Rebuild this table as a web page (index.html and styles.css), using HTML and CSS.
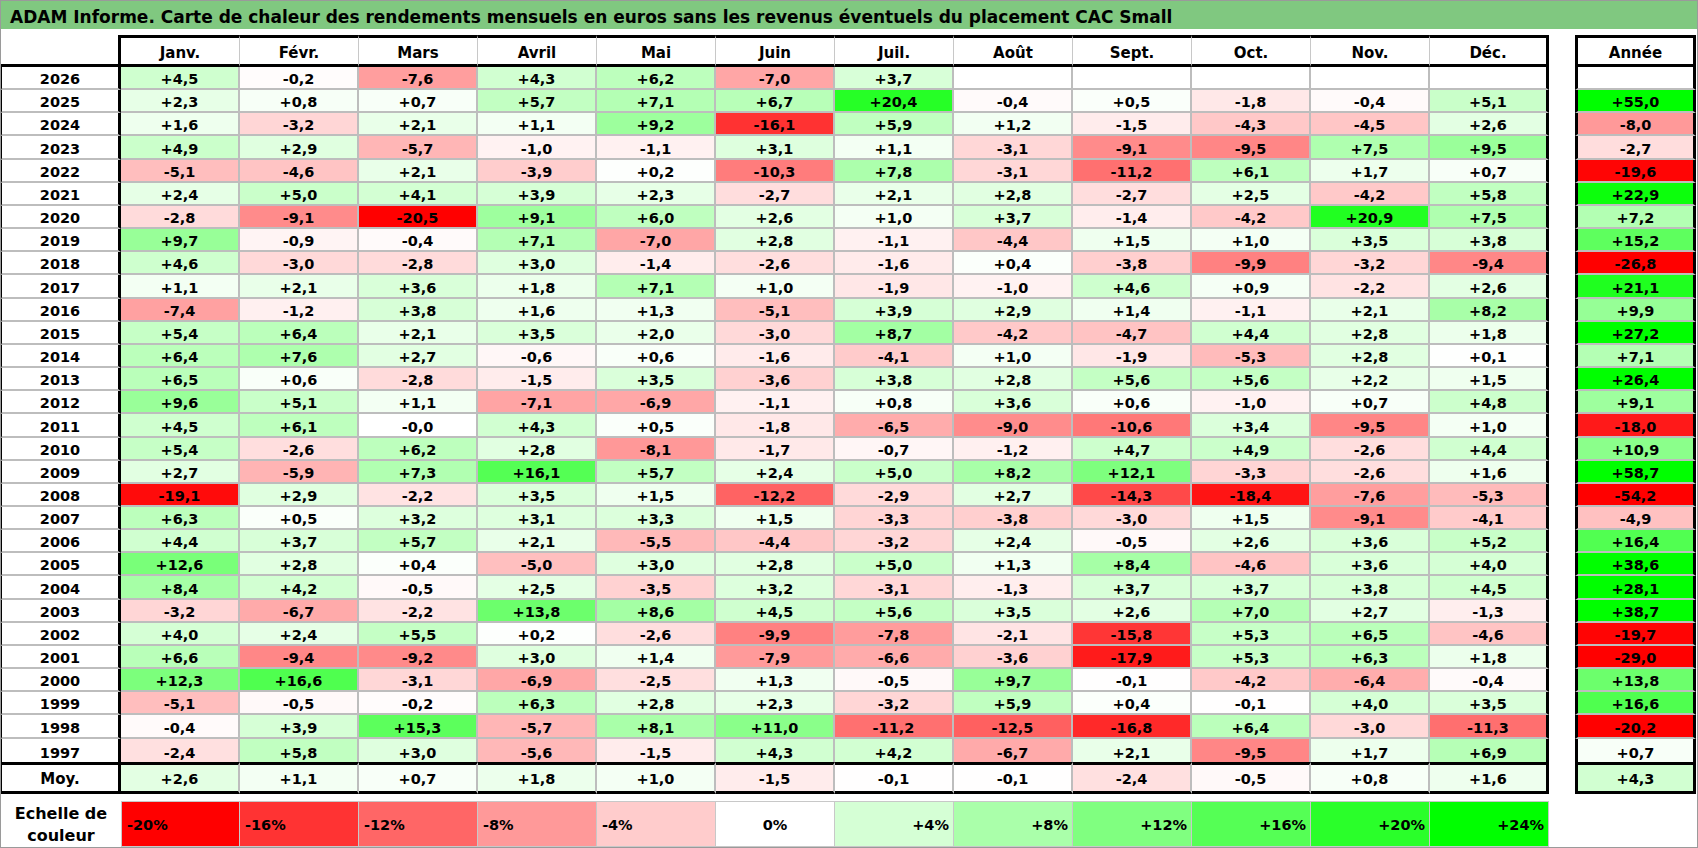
FILE: index.html
```html
<!DOCTYPE html>
<html lang="fr">
<head>
<meta charset="utf-8">
<title>ADAM Informe - Carte de chaleur CAC Small</title>
<link rel="stylesheet" href="styles.css">
</head>
<body>
<div class="page">
  <div class="title">ADAM Informe. Carte de chaleur des rendements mensuels en euros sans les revenus éventuels du placement CAC Small</div>
  <div class="heatmap">
    <div class="row head"><div class="yr"></div><div class="c">Janv.</div><div class="c">Févr.</div><div class="c">Mars</div><div class="c">Avril</div><div class="c">Mai</div><div class="c">Juin</div><div class="c">Juil.</div><div class="c">Août</div><div class="c">Sept.</div><div class="c">Oct.</div><div class="c">Nov.</div><div class="c">Déc.</div><div class="tot">Année</div></div>
    <div class="row"><div class="yr">2026</div><div class="c">+4,5</div><div class="c">-0,2</div><div class="c">-7,6</div><div class="c">+4,3</div><div class="c">+6,2</div><div class="c">-7,0</div><div class="c">+3,7</div><div class="c"></div><div class="c"></div><div class="c"></div><div class="c"></div><div class="c"></div><div class="tot"></div></div>
    <div class="row"><div class="yr">2025</div><div class="c">+2,3</div><div class="c">+0,8</div><div class="c">+0,7</div><div class="c">+5,7</div><div class="c">+7,1</div><div class="c">+6,7</div><div class="c">+20,4</div><div class="c">-0,4</div><div class="c">+0,5</div><div class="c">-1,8</div><div class="c">-0,4</div><div class="c">+5,1</div><div class="tot">+55,0</div></div>
    <div class="row"><div class="yr">2024</div><div class="c">+1,6</div><div class="c">-3,2</div><div class="c">+2,1</div><div class="c">+1,1</div><div class="c">+9,2</div><div class="c">-16,1</div><div class="c">+5,9</div><div class="c">+1,2</div><div class="c">-1,5</div><div class="c">-4,3</div><div class="c">-4,5</div><div class="c">+2,6</div><div class="tot">-8,0</div></div>
    <div class="row"><div class="yr">2023</div><div class="c">+4,9</div><div class="c">+2,9</div><div class="c">-5,7</div><div class="c">-1,0</div><div class="c">-1,1</div><div class="c">+3,1</div><div class="c">+1,1</div><div class="c">-3,1</div><div class="c">-9,1</div><div class="c">-9,5</div><div class="c">+7,5</div><div class="c">+9,5</div><div class="tot">-2,7</div></div>
    <div class="row"><div class="yr">2022</div><div class="c">-5,1</div><div class="c">-4,6</div><div class="c">+2,1</div><div class="c">-3,9</div><div class="c">+0,2</div><div class="c">-10,3</div><div class="c">+7,8</div><div class="c">-3,1</div><div class="c">-11,2</div><div class="c">+6,1</div><div class="c">+1,7</div><div class="c">+0,7</div><div class="tot">-19,6</div></div>
    <div class="row"><div class="yr">2021</div><div class="c">+2,4</div><div class="c">+5,0</div><div class="c">+4,1</div><div class="c">+3,9</div><div class="c">+2,3</div><div class="c">-2,7</div><div class="c">+2,1</div><div class="c">+2,8</div><div class="c">-2,7</div><div class="c">+2,5</div><div class="c">-4,2</div><div class="c">+5,8</div><div class="tot">+22,9</div></div>
    <div class="row"><div class="yr">2020</div><div class="c">-2,8</div><div class="c">-9,1</div><div class="c">-20,5</div><div class="c">+9,1</div><div class="c">+6,0</div><div class="c">+2,6</div><div class="c">+1,0</div><div class="c">+3,7</div><div class="c">-1,4</div><div class="c">-4,2</div><div class="c">+20,9</div><div class="c">+7,5</div><div class="tot">+7,2</div></div>
    <div class="row"><div class="yr">2019</div><div class="c">+9,7</div><div class="c">-0,9</div><div class="c">-0,4</div><div class="c">+7,1</div><div class="c">-7,0</div><div class="c">+2,8</div><div class="c">-1,1</div><div class="c">-4,4</div><div class="c">+1,5</div><div class="c">+1,0</div><div class="c">+3,5</div><div class="c">+3,8</div><div class="tot">+15,2</div></div>
    <div class="row"><div class="yr">2018</div><div class="c">+4,6</div><div class="c">-3,0</div><div class="c">-2,8</div><div class="c">+3,0</div><div class="c">-1,4</div><div class="c">-2,6</div><div class="c">-1,6</div><div class="c">+0,4</div><div class="c">-3,8</div><div class="c">-9,9</div><div class="c">-3,2</div><div class="c">-9,4</div><div class="tot">-26,8</div></div>
    <div class="row"><div class="yr">2017</div><div class="c">+1,1</div><div class="c">+2,1</div><div class="c">+3,6</div><div class="c">+1,8</div><div class="c">+7,1</div><div class="c">+1,0</div><div class="c">-1,9</div><div class="c">-1,0</div><div class="c">+4,6</div><div class="c">+0,9</div><div class="c">-2,2</div><div class="c">+2,6</div><div class="tot">+21,1</div></div>
    <div class="row"><div class="yr">2016</div><div class="c">-7,4</div><div class="c">-1,2</div><div class="c">+3,8</div><div class="c">+1,6</div><div class="c">+1,3</div><div class="c">-5,1</div><div class="c">+3,9</div><div class="c">+2,9</div><div class="c">+1,4</div><div class="c">-1,1</div><div class="c">+2,1</div><div class="c">+8,2</div><div class="tot">+9,9</div></div>
    <div class="row"><div class="yr">2015</div><div class="c">+5,4</div><div class="c">+6,4</div><div class="c">+2,1</div><div class="c">+3,5</div><div class="c">+2,0</div><div class="c">-3,0</div><div class="c">+8,7</div><div class="c">-4,2</div><div class="c">-4,7</div><div class="c">+4,4</div><div class="c">+2,8</div><div class="c">+1,8</div><div class="tot">+27,2</div></div>
    <div class="row"><div class="yr">2014</div><div class="c">+6,4</div><div class="c">+7,6</div><div class="c">+2,7</div><div class="c">-0,6</div><div class="c">+0,6</div><div class="c">-1,6</div><div class="c">-4,1</div><div class="c">+1,0</div><div class="c">-1,9</div><div class="c">-5,3</div><div class="c">+2,8</div><div class="c">+0,1</div><div class="tot">+7,1</div></div>
    <div class="row"><div class="yr">2013</div><div class="c">+6,5</div><div class="c">+0,6</div><div class="c">-2,8</div><div class="c">-1,5</div><div class="c">+3,5</div><div class="c">-3,6</div><div class="c">+3,8</div><div class="c">+2,8</div><div class="c">+5,6</div><div class="c">+5,6</div><div class="c">+2,2</div><div class="c">+1,5</div><div class="tot">+26,4</div></div>
    <div class="row"><div class="yr">2012</div><div class="c">+9,6</div><div class="c">+5,1</div><div class="c">+1,1</div><div class="c">-7,1</div><div class="c">-6,9</div><div class="c">-1,1</div><div class="c">+0,8</div><div class="c">+3,6</div><div class="c">+0,6</div><div class="c">-1,0</div><div class="c">+0,7</div><div class="c">+4,8</div><div class="tot">+9,1</div></div>
    <div class="row"><div class="yr">2011</div><div class="c">+4,5</div><div class="c">+6,1</div><div class="c">-0,0</div><div class="c">+4,3</div><div class="c">+0,5</div><div class="c">-1,8</div><div class="c">-6,5</div><div class="c">-9,0</div><div class="c">-10,6</div><div class="c">+3,4</div><div class="c">-9,5</div><div class="c">+1,0</div><div class="tot">-18,0</div></div>
    <div class="row"><div class="yr">2010</div><div class="c">+5,4</div><div class="c">-2,6</div><div class="c">+6,2</div><div class="c">+2,8</div><div class="c">-8,1</div><div class="c">-1,7</div><div class="c">-0,7</div><div class="c">-1,2</div><div class="c">+4,7</div><div class="c">+4,9</div><div class="c">-2,6</div><div class="c">+4,4</div><div class="tot">+10,9</div></div>
    <div class="row"><div class="yr">2009</div><div class="c">+2,7</div><div class="c">-5,9</div><div class="c">+7,3</div><div class="c">+16,1</div><div class="c">+5,7</div><div class="c">+2,4</div><div class="c">+5,0</div><div class="c">+8,2</div><div class="c">+12,1</div><div class="c">-3,3</div><div class="c">-2,6</div><div class="c">+1,6</div><div class="tot">+58,7</div></div>
    <div class="row"><div class="yr">2008</div><div class="c">-19,1</div><div class="c">+2,9</div><div class="c">-2,2</div><div class="c">+3,5</div><div class="c">+1,5</div><div class="c">-12,2</div><div class="c">-2,9</div><div class="c">+2,7</div><div class="c">-14,3</div><div class="c">-18,4</div><div class="c">-7,6</div><div class="c">-5,3</div><div class="tot">-54,2</div></div>
    <div class="row"><div class="yr">2007</div><div class="c">+6,3</div><div class="c">+0,5</div><div class="c">+3,2</div><div class="c">+3,1</div><div class="c">+3,3</div><div class="c">+1,5</div><div class="c">-3,3</div><div class="c">-3,8</div><div class="c">-3,0</div><div class="c">+1,5</div><div class="c">-9,1</div><div class="c">-4,1</div><div class="tot">-4,9</div></div>
    <div class="row"><div class="yr">2006</div><div class="c">+4,4</div><div class="c">+3,7</div><div class="c">+5,7</div><div class="c">+2,1</div><div class="c">-5,5</div><div class="c">-4,4</div><div class="c">-3,2</div><div class="c">+2,4</div><div class="c">-0,5</div><div class="c">+2,6</div><div class="c">+3,6</div><div class="c">+5,2</div><div class="tot">+16,4</div></div>
    <div class="row"><div class="yr">2005</div><div class="c">+12,6</div><div class="c">+2,8</div><div class="c">+0,4</div><div class="c">-5,0</div><div class="c">+3,0</div><div class="c">+2,8</div><div class="c">+5,0</div><div class="c">+1,3</div><div class="c">+8,4</div><div class="c">-4,6</div><div class="c">+3,6</div><div class="c">+4,0</div><div class="tot">+38,6</div></div>
    <div class="row"><div class="yr">2004</div><div class="c">+8,4</div><div class="c">+4,2</div><div class="c">-0,5</div><div class="c">+2,5</div><div class="c">-3,5</div><div class="c">+3,2</div><div class="c">-3,1</div><div class="c">-1,3</div><div class="c">+3,7</div><div class="c">+3,7</div><div class="c">+3,8</div><div class="c">+4,5</div><div class="tot">+28,1</div></div>
    <div class="row"><div class="yr">2003</div><div class="c">-3,2</div><div class="c">-6,7</div><div class="c">-2,2</div><div class="c">+13,8</div><div class="c">+8,6</div><div class="c">+4,5</div><div class="c">+5,6</div><div class="c">+3,5</div><div class="c">+2,6</div><div class="c">+7,0</div><div class="c">+2,7</div><div class="c">-1,3</div><div class="tot">+38,7</div></div>
    <div class="row"><div class="yr">2002</div><div class="c">+4,0</div><div class="c">+2,4</div><div class="c">+5,5</div><div class="c">+0,2</div><div class="c">-2,6</div><div class="c">-9,9</div><div class="c">-7,8</div><div class="c">-2,1</div><div class="c">-15,8</div><div class="c">+5,3</div><div class="c">+6,5</div><div class="c">-4,6</div><div class="tot">-19,7</div></div>
    <div class="row"><div class="yr">2001</div><div class="c">+6,6</div><div class="c">-9,4</div><div class="c">-9,2</div><div class="c">+3,0</div><div class="c">+1,4</div><div class="c">-7,9</div><div class="c">-6,6</div><div class="c">-3,6</div><div class="c">-17,9</div><div class="c">+5,3</div><div class="c">+6,3</div><div class="c">+1,8</div><div class="tot">-29,0</div></div>
    <div class="row"><div class="yr">2000</div><div class="c">+12,3</div><div class="c">+16,6</div><div class="c">-3,1</div><div class="c">-6,9</div><div class="c">-2,5</div><div class="c">+1,3</div><div class="c">-0,5</div><div class="c">+9,7</div><div class="c">-0,1</div><div class="c">-4,2</div><div class="c">-6,4</div><div class="c">-0,4</div><div class="tot">+13,8</div></div>
    <div class="row"><div class="yr">1999</div><div class="c">-5,1</div><div class="c">-0,5</div><div class="c">-0,2</div><div class="c">+6,3</div><div class="c">+2,8</div><div class="c">+2,3</div><div class="c">-3,2</div><div class="c">+5,9</div><div class="c">+0,4</div><div class="c">-0,1</div><div class="c">+4,0</div><div class="c">+3,5</div><div class="tot">+16,6</div></div>
    <div class="row"><div class="yr">1998</div><div class="c">-0,4</div><div class="c">+3,9</div><div class="c">+15,3</div><div class="c">-5,7</div><div class="c">+8,1</div><div class="c">+11,0</div><div class="c">-11,2</div><div class="c">-12,5</div><div class="c">-16,8</div><div class="c">+6,4</div><div class="c">-3,0</div><div class="c">-11,3</div><div class="tot">-20,2</div></div>
    <div class="row last"><div class="yr">1997</div><div class="c">-2,4</div><div class="c">+5,8</div><div class="c">+3,0</div><div class="c">-5,6</div><div class="c">-1,5</div><div class="c">+4,3</div><div class="c">+4,2</div><div class="c">-6,7</div><div class="c">+2,1</div><div class="c">-9,5</div><div class="c">+1,7</div><div class="c">+6,9</div><div class="tot">+0,7</div></div>
    <div class="row avg"><div class="yr">Moy.</div><div class="c">+2,6</div><div class="c">+1,1</div><div class="c">+0,7</div><div class="c">+1,8</div><div class="c">+1,0</div><div class="c">-1,5</div><div class="c">-0,1</div><div class="c">-0,1</div><div class="c">-2,4</div><div class="c">-0,5</div><div class="c">+0,8</div><div class="c">+1,6</div><div class="tot">+4,3</div></div>
  </div>
  <div class="legend">
    <div class="legend-label">Echelle de<br>couleur</div>
    <div class="lg neg">-20%</div>
    <div class="lg neg">-16%</div>
    <div class="lg neg">-12%</div>
    <div class="lg neg">-8%</div>
    <div class="lg neg">-4%</div>
    <div class="lg zero">0%</div>
    <div class="lg pos">+4%</div>
    <div class="lg pos">+8%</div>
    <div class="lg pos">+12%</div>
    <div class="lg pos">+16%</div>
    <div class="lg pos">+20%</div>
    <div class="lg pos">+24%</div>
  </div>
</div>
<script src="script.js"></script>
</body>
</html>
```

FILE: styles.css
```css
* {
  box-sizing: border-box;
}

body {
  margin: 0;
  background: #ffffff;
  color: #000000;
  font-family: "DejaVu Sans", Verdana, sans-serif;
  font-weight: bold;
}

.page {
  width: 1698px;
  height: 848px;
  border: 1px solid #9a9a9a;
  overflow: hidden;
}

.title {
  height: 28px;
  background: #80c880;
  font-size: 17px;
  line-height: 32px;
  padding-left: 9px;
  white-space: nowrap;
  overflow: hidden;
}

.heatmap {
  margin-top: 6px;
}

.row {
  display: grid;
  grid-template-columns: 120px repeat(12, 119px) 147px;
  height: calc(695px / 30);
  font-size: 14.5px;
}

.row > div {
  display: flex;
  align-items: flex-end;
  justify-content: center;
  line-height: 17px;
  white-space: nowrap;
}

.row > .yr {
  border-left: 1px solid #000000;
  border-right: 3px solid #000000;
  border-bottom: 2px solid #bdbdbd;
}

.row > .c {
  border-right: 2px solid #bdbdbd;
  border-bottom: 2px solid #bdbdbd;
}

.row > .c:nth-child(13) {
  border-right: 3px solid #000000;
}

.row > .tot {
  margin-left: 26px;
  border-left: 3px solid #000000;
  border-right: 3px solid #000000;
  border-bottom: 2px solid #bdbdbd;
}

/* header */
.row.head {
  height: 32px;
  font-size: 15px;
}

.row.head > .yr {
  border-left: none;
  border-bottom: 3px solid #000000;
  padding-bottom: 2px;
}

.row.head > .c {
  border-top: 3px solid #000000;
  border-bottom: 3px solid #000000;
  border-right: 1px solid #c8c8c8;
  padding-bottom: 2px;
}

.row.head > .c:nth-child(13) {
  border-right: 3px solid #000000;
}

.row.head > .tot {
  border: 3px solid #000000;
  padding-bottom: 2px;
}

/* last year row */
.row.last > .yr,
.row.last > .c,
.row.last > .tot {
  border-bottom: none;
}

/* average row */
.row.avg {
  height: 32px;
}

.row.avg > .yr,
.row.avg > .c,
.row.avg > .tot {
  border-top: 3px solid #000000;
  border-bottom: 3px solid #000000;
  padding-bottom: 3px;
}

.row.avg > .yr {
  font-size: 15px;
}

/* legend */
.legend {
  display: grid;
  grid-template-columns: 120px repeat(12, 119px);
  height: 45px;
  margin-top: 7px;
  font-size: 14.5px;
}

.legend-label {
  text-align: center;
  font-size: 16px;
  line-height: 22px;
  padding-top: 2px;
}

.lg {
  display: flex;
  align-items: center;
  padding-top: 3px;
  border-top: 1px solid #c8c8c8;
  border-bottom: 1px solid #c8c8c8;
  border-right: 1px solid #c8c8c8;
}

.lg:nth-child(2) {
  border-left: 1px solid #c8c8c8;
}

.lg.neg {
  justify-content: flex-start;
  padding-left: 5px;
}

.lg.zero {
  justify-content: center;
}

.lg.pos {
  justify-content: flex-end;
  padding-right: 4px;
}
```

FILE: script.js
```js
(function () {
  function heat(v) {
    var t, k;
    if (v < 0) {
      t = Math.min(-v / 20, 1);
      k = Math.round(255 * (1 - t));
      return "rgb(255," + k + "," + k + ")";
    }
    t = Math.min(v / 24, 1);
    k = Math.round(255 * (1 - t));
    return "rgb(" + k + ",255," + k + ")";
  }

  var cells = document.querySelectorAll(
    ".row:not(.head) > .c, .row:not(.head) > .tot, .lg"
  );
  for (var i = 0; i < cells.length; i++) {
    var el = cells[i];
    var s = el.textContent.trim().replace("%", "").replace(",", ".");
    if (!s) continue;
    var v = parseFloat(s);
    if (isNaN(v)) continue;
    el.style.backgroundColor = heat(v);
  }
})();
```
